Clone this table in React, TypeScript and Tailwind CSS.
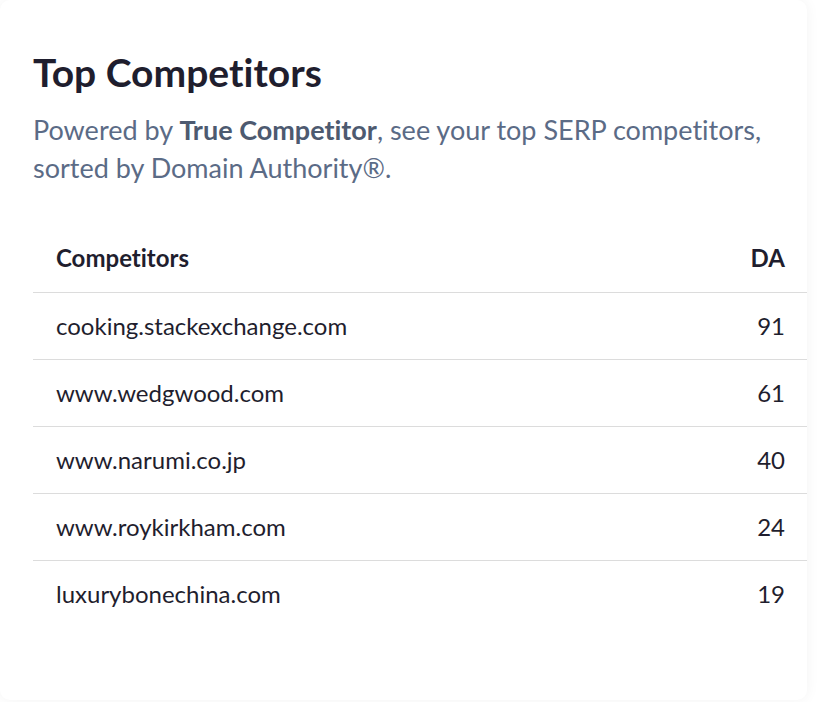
const competitors = [
  { domain: "cooking.stackexchange.com", da: 91 },
  { domain: "www.wedgwood.com", da: 61 },
  { domain: "www.narumi.co.jp", da: 40 },
  { domain: "www.roykirkham.com", da: 24 },
  { domain: "luxurybonechina.com", da: 19 },
];

export default function App() {
  return (
    <div
      className="min-h-screen bg-white [font-variant-ligatures:none]"
      style={{ fontFamily: "Lato, 'Open Sans', sans-serif" }}
    >
      <section className="w-[807px] h-[700px] bg-white rounded-[10px] shadow-[0_0_14px_rgba(0,0,0,0.05)] pl-[33px] pt-[48px]">
        <h2 className="text-[39px] leading-[48px] font-bold text-[#1f1e2e]">Top Competitors</h2>
        <p className="mt-[15px] text-[27px] leading-[38px] text-[#5b6b86]">
          Powered by <span className="font-bold text-[#4d5a70]">True Competitor</span>, see your top SERP competitors,
          <br />
          sorted by Domain Authority®.
        </p>
        <table className="mt-[38px] w-[774px] text-[24px] text-[#1f1e2e]">
          <thead>
            <tr className="h-[67px] border-b border-[#dcdcdc]">
              <th className="pl-[23px] text-left font-bold">Competitors</th>
              <th className="pr-[22px] text-right font-bold">DA</th>
            </tr>
          </thead>
          <tbody>
            {competitors.map((c, i) => (
              <tr
                key={c.domain}
                className={i < competitors.length - 1 ? "h-[67px] border-b border-[#dcdcdc]" : "h-[67px]"}
              >
                <td className="pl-[23px]">{c.domain}</td>
                <td className="pr-[22px] text-right">{c.da}</td>
              </tr>
            ))}
          </tbody>
        </table>
      </section>
    </div>
  );
}
